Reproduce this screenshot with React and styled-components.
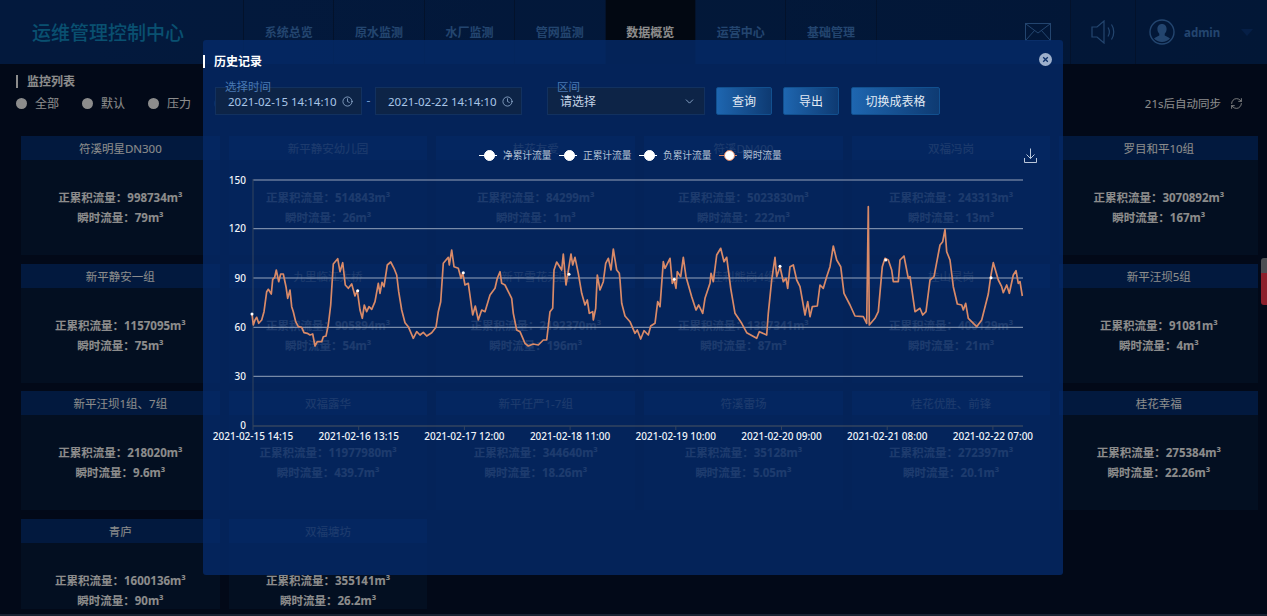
import React from "react";
import styled, { createGlobalStyle } from "styled-components";
import { ChevronDown, Clock, RefreshCw } from "lucide-react";

const NAV = ["系统总览", "原水监测", "水厂监测", "管网监测", "数据概览", "运营中心", "基础管理"];
const FILTERS = [
  { name: "全部", color: "#fff" },
  { name: "默认", color: "#fff" },
  { name: "压力", color: "#fff" },
  { name: "流量", color: "#2f8fe8" },
];
const CARDS = [
  ["符溪明星DN300", "998734", "79"],
  ["新平静安幼儿园", "514843", "26"],
  ["桂花友爱", "84299", "1"],
  ["符溪DN400", "5023830", "222"],
  ["双福冯岗", "243313", "13"],
  ["罗目和平10组", "3070892", "167"],
  ["新平静安一组", "1157095", "75"],
  ["九里临江大桥", "905894", "54"],
  ["新平雪花无国", "2192370", "196"],
  ["佳利熊岗4组", "1387341", "87"],
  ["桂山灵岗", "400129", "21"],
  ["新平汪坝5组", "91081", "4"],
  ["新平汪坝1组、7组", "218020", "9.6"],
  ["双福露华", "11977980", "439.7"],
  ["新平任严1-7组", "344640", "18.26"],
  ["符溪雷场", "35128", "5.05"],
  ["桂花优胜、前锋", "272397", "20.1"],
  ["桂花幸福", "275384", "22.26"],
  ["青庐", "1600136", "90"],
  ["双福塘坊", "355141", "26.2"],
];
const LEGEND = [
  { name: "净累计流量", ring: "#fff" },
  { name: "正累计流量", ring: "#fff" },
  { name: "负累计流量", ring: "#fff" },
  { name: "瞬时流量", ring: "#dd8460" },
];

// chart line traced from the reference, x,y pairs at 3x, split in two crops
const TRACE_A = [156,432,160,465,165,450,170,442,176,460,185,450,192,425,200,365,205,358,214,372,218,328,224,322,229,300,236,335,242,312,250,312,258,350,263,385,270,360,275,410,280,425,287,455,295,470,305,472,312,488,322,490,330,495,338,492,345,528,352,515,365,515,370,500,378,498,385,465,392,405,400,282,413,266,420,305,428,278,436,345,445,355,455,342,465,378,472,362,480,420,487,445,493,405,500,425,507,410,515,418,525,395,535,340,540,370,546,337,552,350,562,285,572,276,582,295,590,315,596,365,605,420,615,458,625,470,640,505,650,485,660,495,670,487,680,498,695,488,708,472,715,425,722,395,730,280,745,262,748,285,755,240,762,290,775,295,783,325,788,308,795,345,805,340,818,435,826,408,835,450,845,420,855,425,870,375,885,355,892,325,900,305,905,340,915,345,925,365,935,385,940,430,950,480,960,485,975,520,985,528,1000,522,1015,525,1030,510,1040,510,1050,425,1058,415,1062,300,1070,276,1085,300,1090,252,1098,345,1113,252,1118,285,1125,262,1135,310,1145,370,1155,405,1162,390,1168,430,1178,425,1180,450,1187,415,1192,315,1200,360,1210,335,1217,280,1225,265,1233,300,1240,237,1250,300,1258,310];
const TRACE_B = [0,330,5,400,15,438,30,455,45,490,52,480,62,507,72,482,85,495,92,468,105,460,113,395,120,410,130,275,135,295,150,265,157,340,162,328,168,355,172,305,182,320,190,262,198,320,215,380,228,420,236,405,248,430,255,385,270,340,273,310,280,335,290,255,302,235,312,275,320,262,332,355,345,430,365,460,380,488,410,505,418,485,440,495,445,430,455,330,465,262,470,320,480,290,490,335,498,325,503,355,510,290,520,285,530,330,540,350,555,435,563,395,570,440,577,410,592,408,600,345,610,355,620,320,630,290,640,228,650,270,662,290,672,370,690,405,705,438,730,440,740,460,745,110,748,465,765,445,775,425,787,290,795,265,805,270,815,300,820,335,835,335,840,270,852,258,865,325,870,320,885,425,900,415,908,435,918,425,930,330,942,320,960,225,968,215,975,178,980,245,990,270,1000,350,1012,402,1025,405,1030,420,1037,400,1045,445,1070,470,1085,450,1105,372,1112,320,1120,278,1135,330,1145,350,1150,368,1160,345,1168,370,1180,315,1188,302,1195,340,1200,335,1207,378];

const toPoints = (trace, left) => {
  const out = [];
  for (let i = 0; i < trace.length; i += 2) {
    out.push(`${(left + trace[i] / 3).toFixed(1)},${(170 + trace[i + 1] / 3).toFixed(1)}`);
  }
  return out;
};
const LINE = [...toPoints(TRACE_A, 200), ...toPoints(TRACE_B, 620)].join(" ");
const MARKS = [[252, 314], [357.7, 290.7], [463.3, 272.7], [569, 274.3], [674.3, 279.3], [780, 266.3], [885.7, 260], [991, 277.7]];
const GRID = [
  { y: 180, label: "150" },
  { y: 228.7, label: "120" },
  { y: 278, label: "90" },
  { y: 327.3, label: "60" },
  { y: 376.3, label: "30" },
];
const XLABELS = ["2021-02-15 14:15", "2021-02-16 13:15", "2021-02-17 12:00", "2021-02-18 11:00", "2021-02-19 10:00", "2021-02-20 09:00", "2021-02-21 08:00", "2021-02-22 07:00"];

const GlobalStyle = createGlobalStyle`
  html, body {
    margin: 0;
    height: 100%;
    overflow: hidden;
    background: #04122c;
    font-family: "Noto Sans", "Noto Sans CJK SC", sans-serif;
  }
`;

const App = () => {
  return (
    <>
      <GlobalStyle />
      <Page>
        <Header>
          <Logo>运维管理控制中心</Logo>
          <Nav>
            {NAV.map((n) => (
              <NavItem key={n} $active={n === "数据概览"}>{n}</NavItem>
            ))}
          </Nav>
          <HeaderIcon>
            <svg width="26" height="18" viewBox="0 0 26 18" fill="none" stroke="#417fca" strokeWidth="1">
              <rect x="0.5" y="0.5" width="25" height="17" />
              <path d="M1 1l12 9 12-9M1 17l8.5-9.5M25 17l-8.5-9.5" />
            </svg>
          </HeaderIcon>
          <HeaderIcon>
            <svg width="24" height="24" viewBox="0 0 24 24" fill="none" stroke="#417fca" strokeWidth="1.2">
              <path d="M1 7h5l7-6v22l-7-6H1z" />
              <path d="M17 7.5c1.6 2.6 1.6 6.4 0 9M20.5 4.5c3 4.4 3 10.6 0 15" />
            </svg>
          </HeaderIcon>
          <UserBox>
            <svg width="26" height="26" viewBox="0 0 26 26">
              <circle cx="13" cy="13" r="12" fill="none" stroke="#417fca" strokeWidth="1.4" />
              <path d="M13 5c3 0 4.600 2.300 4.600 5 0 2-.8 3.700-1.900 4.800v1.600c2 .9 4 1.800 5.300 3.100a11 11 0 0 1-16 0c1.300-1.300 3.300-2.200 5.300-3.100v-1.600C9.200 13.700 8.400 12 8.400 10c0-2.700 1.600-5 4.600-5z" fill="#417fca" />
            </svg>
            <UserName>admin</UserName>
            <Caret />
          </UserBox>
        </Header>
        <SubBar>
          <div>
            <ListTitle>监控列表</ListTitle>
            <Filters>
              {FILTERS.map((f) => (
                <Filter key={f.name}>
                  <FilterDot $color={f.color} />
                  {f.name}
                </Filter>
              ))}
            </Filters>
          </div>
          <Sync>
            21s后自动同步
            <RefreshCw size={13} strokeWidth={1.6} />
          </Sync>
        </SubBar>
        <CardGrid>
          {CARDS.map(([name, total, rate]) => (
            <Card key={name}>
              <CardTitle>{name}</CardTitle>
              <CardBody>
                <div>正累积流量：{total}m³</div>
                <div>瞬时流量：{rate}m³</div>
              </CardBody>
            </Card>
          ))}
        </CardGrid>
        <Scrollbar />
      </Page>
      <Overlay />
      <Modal>
        <ModalHead>
          <ModalTitle>历史记录</ModalTitle>
          <CloseIcon viewBox="0 0 13 13">
            <circle cx="6.500" cy="6.500" r="6.500" fill="#9eb0cc" />
            <path d="M4.200 4.200l4.600 4.600M8.800 4.200l-4.600 4.600" stroke="#0c2f68" strokeWidth="1.300" />
          </CloseIcon>
        </ModalHead>
        <Toolbar>
          <Field $width={147}>
            <FieldLabel>选择时间</FieldLabel>
            <DateText>2021-02-15 14:14:10</DateText>
            <Clock size={11} strokeWidth={1.5} />
          </Field>
          <Dash>-</Dash>
          <Field $width={147}>
            <DateText>2021-02-22 14:14:10</DateText>
            <Clock size={11} strokeWidth={1.5} />
          </Field>
          <Field $width={158} $gap={25}>
            <FieldLabel>区间</FieldLabel>
            <SelectText>请选择</SelectText>
            <ChevronDown size={13} strokeWidth={1.4} />
          </Field>
          <ActionButton $width={56} $gap={11}>查询</ActionButton>
          <ActionButton $width={56} $gap={11}>导出</ActionButton>
          <ActionButton $width={89} $gap={12}>切换成表格</ActionButton>
        </Toolbar>
        <LegendRow>
          {LEGEND.map((l) => (
            <LegendItem key={l.name}>
              <LegendMark $ring={l.ring} />
              {l.name}
            </LegendItem>
          ))}
          <DownloadIcon viewBox="0 0 13 15" fill="none" stroke="#cfd9e8" strokeWidth="0.9">
            <path d="M6.500 0.500v10M2.500 6.500l4 4 4-4M0.500 10v4.500h12V10" />
          </DownloadIcon>
        </LegendRow>
        <Chart viewBox="203 170 860 280">
          {GRID.map((g, i) => (
            <g key={g.label}>
              <line x1="253" x2="1023" y1={g.y} y2={g.y} stroke={i === 0 ? "#66799a" : "#95a4bc"} strokeWidth={i === 0 ? 1.6 : 1} />
              <AxisText x="246" y={g.y + 3.500} textAnchor="end">{g.label}</AxisText>
            </g>
          ))}
          <AxisText x="246" y="429" textAnchor="end">0</AxisText>
          <line x1="253" x2="253" y1="179" y2="426" stroke="#33445f" strokeWidth="1" />
          <line x1="253" x2="1023" y1="426" y2="426" stroke="#33445f" strokeWidth="1.600" />
          {XLABELS.map((t, i) => (
            <g key={t}>
              <line x1={253 + i * 105.7} x2={253 + i * 105.7} y1="426" y2="430" stroke="#33445f" />
              <AxisText x={253 + i * 105.7} y="440" textAnchor="middle">{t}</AxisText>
            </g>
          ))}
          <polyline points={LINE} fill="none" stroke="#d98a68" strokeWidth="1.700" strokeLinejoin="round" />
          {MARKS.map(([x, y]) => (
            <circle key={x} cx={x} cy={y} r="1.500" fill="#fff" />
          ))}
        </Chart>
      </Modal>
    </>
  );
};

export default App;

const Page = styled.div`
  width: 1267px;
  height: 616px;
  overflow: hidden;
  box-sizing: border-box;
  border-bottom: 2px solid #2a3d5c;
  background: #04122c;
`;

const Header = styled.div`
  height: 64px;
  display: flex;
  align-items: center;
  background: linear-gradient(90deg, #062f70, #052a63);
`;

const Logo = styled.div`
  width: 211px;
  padding-left: 32px;
  font-size: 19px;
  font-weight: 500;
  color: #1292cc;
`;

const Nav = styled.div`
  display: flex;
  height: 100%;
  width: 762px;
  border-left: 1px solid #06224f;
`;

const NavItem = styled.div`
  width: 90.4px;
  box-sizing: border-box;
  display: flex;
  align-items: center;
  justify-content: center;
  border-right: 1px solid #06224f;
  font-size: 12px;
  font-weight: 700;
  color: ${(p) => (p.$active ? "#fff" : "#417fca")};
  background: ${(p) => (p.$active ? "#041021" : "transparent")};
`;

const HeaderIcon = styled.div`
  width: 64px;
  height: 100%;
  display: flex;
  align-items: center;
  justify-content: center;
  border-right: 1px solid #06224f;
`;

const UserBox = styled.div`
  flex: 1;
  display: flex;
  align-items: center;
  padding-left: 13px;
`;

const UserName = styled.span`
  margin-left: 9px;
  font-size: 11.500px;
  font-weight: 700;
  color: #417fca;
`;

const Caret = styled.span`
  margin-left: 21px;
  border-left: 6px solid transparent;
  border-right: 6px solid transparent;
  border-top: 7px solid #0b3a80;
`;

const SubBar = styled.div`
  height: 72px;
  display: flex;
  justify-content: space-between;
  padding: 11px 24px 0 16px;
  box-sizing: border-box;
`;

const ListTitle = styled.div`
  border-left: 2px solid #fff;
  padding-left: 9px;
  height: 13px;
  line-height: 13px;
  font-size: 12px;
  font-weight: 700;
  color: #fff;
`;

const Filters = styled.div`
  display: flex;
  margin-top: 6px;
`;

const Filter = styled.div`
  width: 66px;
  display: flex;
  align-items: center;
  gap: 8px;
  font-size: 12px;
  color: #fff;
`;

const FilterDot = styled.span`
  width: 11px;
  height: 11px;
  border-radius: 50%;
  background: ${(p) => p.$color};
`;

const Sync = styled.div`
  display: flex;
  align-items: center;
  gap: 9px;
  height: 18px;
  margin-top: 19px;
  font-size: 11.500px;
  color: #fff;
`;

const CardGrid = styled.div`
  height: 473px;
  overflow: hidden;
  padding: 0 9px 0 21px;
  display: grid;
  grid-template-columns: repeat(6, 198.700px);
  grid-auto-rows: 119px;
  gap: 8.500px 9px;
`;

const Card = styled.div`
  background: #071c3c;
  display: flex;
  flex-direction: column;
`;

const CardTitle = styled.div`
  height: 24px;
  line-height: 25px;
  text-align: center;
  font-size: 11.500px;
  color: #fff;
  background: #042f71;
`;

const CardBody = styled.div`
  padding-top: 28px;
  text-align: center;
  font-size: 11.500px;
  line-height: 20px;
  font-weight: 700;
  color: #fff;
`;

const Scrollbar = styled.div`
  position: absolute;
  left: 1261px;
  top: 258px;
  width: 6px;
  height: 47px;
  border-radius: 3px 0 0 3px;
  box-sizing: border-box;
  background: linear-gradient(#8b8f98 0 15px, #ff3b50 15px);
`;

const Overlay = styled.div`
  position: absolute;
  inset: 0;
  width: 1267px;
  height: 616px;
  background: rgba(0, 0, 0, 0.45);
`;

const Modal = styled.div`
  position: absolute;
  left: 203px;
  top: 40px;
  width: 860px;
  height: 535px;
  border-radius: 3px;
  background: rgba(5, 42, 104, 0.82);
`;

const ModalHead = styled.div`
  height: 42px;
  display: flex;
  align-items: center;
  justify-content: space-between;
  padding-right: 11px;
`;

const CloseIcon = styled.svg`
  width: 13px;
  height: 13px;
  margin-bottom: 4px;
`;

const ModalTitle = styled.div`
  border-left: 2px solid #fff;
  padding-left: 9px;
  height: 13px;
  line-height: 13px;
  font-size: 12px;
  font-weight: 700;
  color: #fff;
`;

const Toolbar = styled.div`
  display: flex;
  margin-top: 5px;
  padding-left: 12px;
  height: 28px;
`;

const Field = styled.div`
  position: relative;
  width: ${(p) => p.$width}px;
  margin-left: ${(p) => p.$gap || 0}px;
  display: flex;
  align-items: center;
  justify-content: space-between;
  box-sizing: border-box;
  padding: 0 8px 0 12px;
  background: #0d2447;
  border: 1px solid #12315f;
  color: #a9c6e8;
`;

const FieldLabel = styled.span`
  position: absolute;
  left: 9px;
  top: -8px;
  font-size: 11.500px;
  line-height: 14px;
  color: #4a7ab3;
`;

const DateText = styled.span`
  font-size: 11.500px;
  line-height: 13px;
  color: #a9c6e8;
  white-space: nowrap;
`;

const SelectText = styled.span`
  font-size: 12px;
  line-height: 13px;
  color: #c4d4e6;
`;

const Dash = styled.span`
  width: 13px;
  text-align: center;
  line-height: 28px;
  font-size: 12px;
  color: #6f9ad0;
`;

const ActionButton = styled.div`
  width: ${(p) => p.$width}px;
  margin-left: ${(p) => p.$gap}px;
  box-sizing: border-box;
  display: flex;
  align-items: center;
  justify-content: center;
  border: 1px solid #12508f;
  border-radius: 2px;
  font-size: 12px;
  color: #e2eaf4;
  background: linear-gradient(90deg, #1e66b0, #0e3a72);
`;

const LegendRow = styled.div`
  display: flex;
  align-items: center;
  height: 16px;
  margin-top: 32px;
  padding: 0 26px 0 276px;
`;

const LegendItem = styled.div`
  display: flex;
  align-items: center;
  gap: 6px;
  width: 80px;
  font-size: 9.700px;
  white-space: nowrap;
  color: #b4c1d4;
`;

const LegendMark = styled.span`
  position: relative;
  flex: none;
  width: 18px;
  height: 1px;
  background: ${(p) => p.$ring};

  &::after {
    content: "";
    position: absolute;
    left: 5px;
    top: -5px;
    box-sizing: border-box;
    width: 11px;
    height: 11px;
    border-radius: 50%;
    background: #fff;
    border: 1px solid ${(p) => p.$ring};
  }
`;

const DownloadIcon = styled.svg`
  width: 13px;
  height: 15px;
  margin-left: auto;
`;

const Chart = styled.svg`
  display: block;
  width: 860px;
  height: 280px;
  margin-top: 7px;
`;

const AxisText = styled.text`
  font-size: 10px;
  font-weight: 500;
  fill: #f0f4f9;
`;
